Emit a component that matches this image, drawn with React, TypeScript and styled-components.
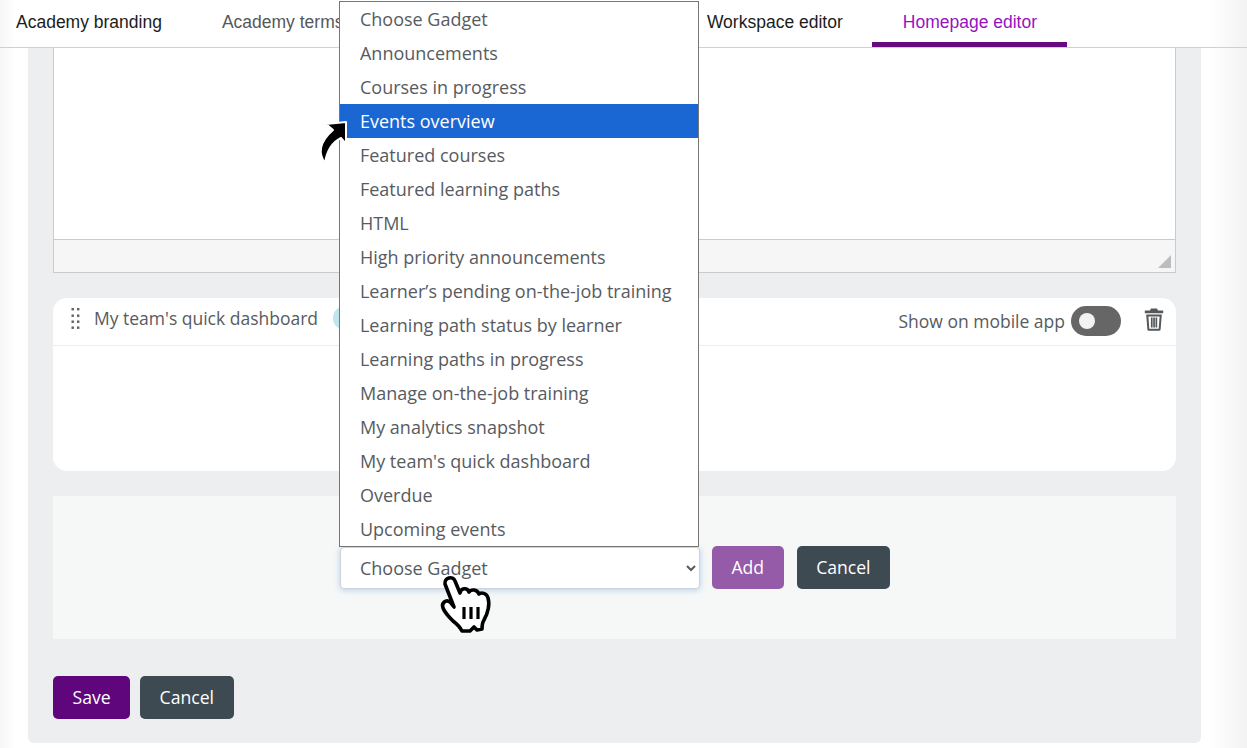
import styled, { createGlobalStyle } from 'styled-components';

const GlobalStyle = createGlobalStyle`
  html, body {
    margin: 0;
    height: 100%;
    overflow: hidden;
    background: #fff;
  }
  * {
    box-sizing: border-box;
  }
`;

const Page = styled.div`
  position: relative;
  width: 1247px;
  height: 748px;
  overflow: hidden;
  font-family: 'Open Sans', 'Noto Sans', sans-serif;
  color: #575b5f;
  background: linear-gradient(90deg, #f7f7f7 0, #fff 16px, #fff 1208px, #f3f3f3 1245px);
`;

const TabBar = styled.nav`
  display: flex;
  height: 48px;
  border-bottom: 1px solid #d0d0d0;
  font-family: 'Liberation Sans', Arial, sans-serif;
`;

const Tab = styled.div<{ $active?: boolean; $width?: number }>`
  flex: none;
  width: ${(p) => (p.$width ? `${p.$width}px` : 'auto')};
  height: 47px;
  padding: 12px ${(p) => (p.$active ? 30 : 29)}px 0 31px;
  font-size: 17.5px;
  line-height: 20px;
  white-space: nowrap;
  overflow: hidden;
  color: ${(p) => (p.$active ? '#9712c0' : '#1c1c1c')};
  border-bottom: 5px solid ${(p) => (p.$active ? '#660a80' : 'transparent')};
`;

const FirstTab = styled(Tab)`
  padding-left: 16px;
`;

const MutedTab = styled(Tab)`
  color: #55585b;
`;

const Panel = styled.main`
  width: 1173px;
  height: 695px;
  margin-left: 28px;
  padding: 0 25px;
  background: #edeef0;
  border-radius: 0 0 6px 6px;
`;

const Editor = styled.section`
  height: 225px;
  display: flex;
  flex-direction: column;
  background: #fff;
  border: 1px solid #cbcbcb;
  border-top: 0;
`;

const EditorBody = styled.div`
  flex: 1;
`;

const EditorStatus = styled.div`
  position: relative;
  height: 33px;
  background: #f6f6f6;
  border-top: 1px solid #cbcbcb;
`;

const ResizeGrip = styled.svg`
  position: absolute;
  right: 4px;
  bottom: 4px;
`;

const GadgetCard = styled.section`
  height: 173px;
  margin-top: 25px;
  background: #fff;
  border-radius: 14px;
`;

const CardHeader = styled.header`
  display: flex;
  align-items: center;
  height: 48px;
  padding: 0 12px 0 17px;
  border-bottom: 1px solid #eeeeee;
`;

const DragHandle = styled.svg`
  flex: none;
  margin-right: 13px;
  margin-top: -6px;
`;

const CardTitle = styled.span`
  font-size: 17.5px;
  line-height: 24px;
  margin-top: -7px;
`;

const TitleBadge = styled.span`
  width: 60px;
  height: 24px;
  margin-left: 15px;
  margin-top: -7px;
  border-radius: 12px;
  background: #bfe6ee;
`;

const MobileLabel = styled.span`
  margin-left: auto;
  font-size: 17.5px;
  line-height: 24px;
  margin-top: -2px;
`;

const Toggle = styled.span`
  position: relative;
  width: 50px;
  height: 30px;
  margin-left: 6px;
  margin-top: -1px;
  border-radius: 15px;
  background: #666666;
`;

const ToggleKnob = styled.span`
  position: absolute;
  top: 7px;
  left: 8px;
  width: 16px;
  height: 16px;
  border-radius: 50%;
  background: #f2f2f2;
`;

const TrashIcon = styled.svg`
  flex: none;
  margin-left: 23px;
  margin-top: -4px;
`;

const AddRow = styled.section`
  display: flex;
  align-items: center;
  justify-content: center;
  gap: 13px;
  height: 143px;
  margin-top: 25px;
  padding-left: 1px;
  background: #f6f8f8;
`;

const SelectWrap = styled.div`
  position: relative;
  width: 360px;
  margin-right: -1px;
`;

const GadgetSelect = styled.select`
  display: block;
  width: 100%;
  height: 42px;
  padding: 0 6px 0 15px;
  font: 18px 'Open Sans', 'Noto Sans', sans-serif;
  color: #575b5f;
  background-color: #fff;
  border: 1px solid #cfd3d6;
  border-radius: 4px;
  box-shadow: 0 1px 6px rgba(120, 170, 225, 0.55);
`;

const OptionList = styled.ul`
  position: absolute;
  left: -1px;
  bottom: 42px;
  width: 360px;
  margin: 0;
  padding: 0;
  list-style: none;
  background: #fff;
  border: 1px solid #767676;
`;

const OptionItem = styled.li<{ $selected?: boolean }>`
  height: 34px;
  padding-left: 20px;
  font-size: 18px;
  line-height: 34px;
  white-space: nowrap;
  color: ${(p) => (p.$selected ? '#fff' : '#575b5f')};
  background: ${(p) => (p.$selected ? '#1a67d3' : 'transparent')};
`;

const Button = styled.button<{ $tone: 'add' | 'save' | 'cancel' }>`
  flex: none;
  height: 43px;
  padding: 0 19.5px 2px;
  font: 17.6px 'Open Sans', 'Noto Sans', sans-serif;
  color: #fff;
  border: 0;
  border-radius: 5px;
  background: ${(p) =>
    p.$tone === 'add' ? '#955aa8' : p.$tone === 'save' ? '#5f067c' : '#3e4a52'};
`;

const FormActions = styled.div`
  display: flex;
  gap: 10px;
  margin-top: 37px;
`;

const HandCursor = styled.svg`
  position: absolute;
  left: 99px;
  top: 28px;
  pointer-events: none;
`;

const ArrowCursor = styled.svg`
  position: absolute;
  left: 317px;
  top: 116px;
  pointer-events: none;
`;

const gadgets = [
  'Choose Gadget',
  'Announcements',
  'Courses in progress',
  'Events overview',
  'Featured courses',
  'Featured learning paths',
  'HTML',
  'High priority announcements',
  'Learner’s pending on-the-job training',
  'Learning path status by learner',
  'Learning paths in progress',
  'Manage on-the-job training',
  'My analytics snapshot',
  "My team's quick dashboard",
  'Overdue',
  'Upcoming events',
];

export default function App() {
  return (
    <Page>
      <GlobalStyle />
      <TabBar>
        <FirstTab>Academy branding</FirstTab>
        <MutedTab $width={485}>Academy terms</MutedTab>
        <Tab>Workspace editor</Tab>
        <Tab $active>Homepage editor</Tab>
      </TabBar>
      <Panel>
        <Editor>
          <EditorBody />
          <EditorStatus>
            <ResizeGrip width="13" height="13" viewBox="0 0 13 13">
              <path d="M13 0V13H0Z" fill="#bdbdbd" />
            </ResizeGrip>
          </EditorStatus>
        </Editor>
        <GadgetCard>
          <CardHeader>
            <DragHandle width="11" height="23" viewBox="0 0 11 23" fill="#5d6164">
              <rect x="1.5" y="1" width="2.4" height="2.4" />
              <rect x="7" y="1" width="2.4" height="2.4" />
              <rect x="1.5" y="7.5" width="2.4" height="2.4" />
              <rect x="7" y="7.5" width="2.4" height="2.4" />
              <rect x="1.5" y="13.5" width="2.4" height="2.4" />
              <rect x="7" y="13.5" width="2.4" height="2.4" />
              <rect x="1.5" y="19.5" width="2.4" height="2.4" />
              <rect x="7" y="19.5" width="2.4" height="2.4" />
            </DragHandle>
            <CardTitle>My team's quick dashboard</CardTitle>
            <TitleBadge />
            <MobileLabel>Show on mobile app</MobileLabel>
            <Toggle>
              <ToggleKnob />
            </Toggle>
            <TrashIcon width="20" height="23" viewBox="0 0 20 23" fill="#54585b">
              <path d="M7 0.5H13L14 2.5H19.2V5.2H0.8V2.5H6Z" />
              <path
                fillRule="evenodd"
                d="M2.2 6.4H17.8L16.6 21.4Q16.5 22.8 15.1 22.8H4.9Q3.5 22.8 3.4 21.4ZM4.4 8.4L5.3 20.8H14.7L15.6 8.4Z"
              />
              <rect x="6.9" y="9.5" width="1.7" height="10" />
              <rect x="9.2" y="9.5" width="1.7" height="10" />
              <rect x="11.5" y="9.5" width="1.7" height="10" />
            </TrashIcon>
          </CardHeader>
        </GadgetCard>
        <AddRow>
          <SelectWrap>
            <GadgetSelect defaultValue="Choose Gadget">
              <option>Choose Gadget</option>
            </GadgetSelect>
            <OptionList>
              {gadgets.map((name) => (
                <OptionItem key={name} $selected={name === 'Events overview'}>
                  {name}
                </OptionItem>
              ))}
            </OptionList>
            <HandCursor width="54" height="58" viewBox="0 0 54 58">
              <path
                d="M6 9C5 3 14 0 16 6L21 18C22 13 28 12 30 17C32 14 38 14 40 19C42 17 48 18 49 23C51 29 49 38 45 45C43 48 43 50 43 54L38 55L35 52L31 56H23C21 52 18 49 14 46C10 42 6 38 4 33C2 28 7 24 11 27L15 32Z"
                fill="#fff"
                stroke="#000"
                strokeWidth="3.6"
                strokeLinejoin="round"
              />
              <path
                d="M25 32V44M32 32V44M39 32V44"
                stroke="#000"
                strokeWidth="3.2"
                strokeLinecap="butt"
              />
            </HandCursor>
          </SelectWrap>
          <Button $tone="add">Add</Button>
          <Button $tone="cancel">Cancel</Button>
        </AddRow>
        <FormActions>
          <Button $tone="save">Save</Button>
          <Button $tone="cancel">Cancel</Button>
        </FormActions>
      </Panel>
      <ArrowCursor width="34" height="52" viewBox="0 0 34 52">
        <path
          d="M9 8L29 6V28L24 22C16 26 10 34 8 47C1 38 2 26 16 14Z"
          fill="#000"
          stroke="#fff"
          strokeWidth="2"
          strokeLinejoin="round"
        />
      </ArrowCursor>
    </Page>
  );
}
